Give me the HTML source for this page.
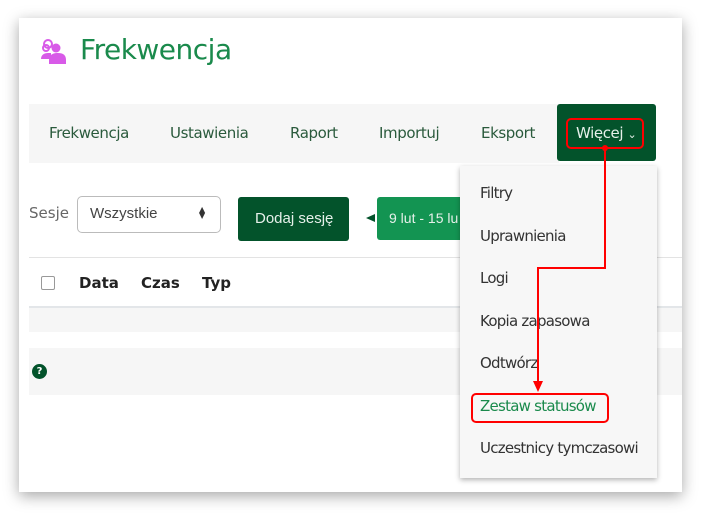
<!DOCTYPE html>
<html><head><meta charset="utf-8"><style>
body{margin:0;width:716px;height:527px;background:#fff;position:relative;overflow:hidden;font-family:"DejaVu Sans","Liberation Sans",sans-serif;}
.a{position:absolute;white-space:nowrap}
.card{position:absolute;left:19px;top:18px;width:663px;height:474px;background:#fff;box-shadow:0 4px 14px rgba(0,0,0,.35);}
.nav{font-size:15px;color:#2a5a3c;letter-spacing:-0.4px}
.dd{font-size:15px;color:#333;letter-spacing:-0.75px}
</style></head><body>
<div class="card"></div>
<svg class="a" style="left:40px;top:38px" width="28" height="26" viewBox="0 0 28 26">
<g fill="#d85ae8"><circle cx="8" cy="6" r="4" fill="none" stroke="#d85ae8" stroke-width="2"/><circle cx="6" cy="10" r="3" fill="none" stroke="#d85ae8" stroke-width="2"/><circle cx="16" cy="10" r="4.5"/><path d="M1 21c0-4 3-6 7-6h3v6H1z"/><path d="M9 26v-4c0-5 4-7 8-7h1c5 0 8 2 8 7v4z"/></g></svg>
<div class="a" style="left:80px;top:33px;font-size:28px;color:#1a8a4c;letter-spacing:-0.5px">Frekwencja</div>
<div class="a" style="left:29px;top:104px;width:530px;height:59px;background:#f6f6f6"></div>
<div class="a nav" style="left:49px;top:124px">Frekwencja</div>
<div class="a nav" style="left:170px;top:124px">Ustawienia</div>
<div class="a nav" style="left:290px;top:124px">Raport</div>
<div class="a nav" style="left:379px;top:124px">Importuj</div>
<div class="a nav" style="left:481px;top:124px">Eksport</div>
<div class="a" style="left:557px;top:104px;width:99px;height:57px;background:#03532b;border-radius:3px"></div>
<div class="a" style="left:576px;top:124px;font-size:15px;color:#e6f0ea;letter-spacing:-0.4px">Więcej <span style="font-size:11px">⌄</span></div>
<div class="a" style="left:566px;top:118px;width:74px;height:27px;border:2px solid #f00;border-radius:5px"></div>
<div class="a" style="left:29px;top:204px;font-size:15px;color:#666">Sesje</div>
<div class="a" style="left:77px;top:196px;width:142px;height:35px;border:1px solid #bbb;border-radius:5px;background:#fff"></div>
<div class="a" style="left:90px;top:205px;font-size:15px;color:#444;font-family:'Liberation Sans',sans-serif">Wszystkie</div>
<div class="a" style="left:199px;top:207px;font-size:8px;color:#333;line-height:6px">▲<br>▼</div>
<div class="a" style="left:238px;top:197px;width:111px;height:44px;background:#03532b;border-radius:3px"></div>
<div class="a" style="left:255px;top:210px;font-size:15px;color:#e6f0ea;font-family:'Liberation Sans',sans-serif">Dodaj sesję</div>
<div class="a" style="left:366px;top:214px;width:0;height:0;border-top:4px solid transparent;border-bottom:4px solid transparent;border-right:9px solid #03532b"></div>
<div class="a" style="left:377px;top:197px;width:90px;height:43px;background:#139452;border-radius:3px"></div>
<div class="a" style="left:389px;top:210px;font-size:14px;color:#e6f0ea;font-family:'Liberation Sans',sans-serif">9 lut - 15 lu</div>
<div class="a" style="left:29px;top:257px;width:653px;height:1px;background:#e3e3e3"></div>
<div class="a" style="left:41px;top:276px;width:12px;height:12px;border:1px solid #999;border-radius:2px"></div>
<div class="a" style="left:79px;top:274px;font-size:15px;font-weight:bold;color:#222">Data</div>
<div class="a" style="left:141px;top:274px;font-size:15px;font-weight:bold;color:#222">Czas</div>
<div class="a" style="left:202px;top:274px;font-size:15px;font-weight:bold;color:#222">Typ</div>
<div class="a" style="left:29px;top:306px;width:653px;height:2px;background:#e3e6e9"></div>
<div class="a" style="left:29px;top:308px;width:653px;height:24px;background:#f6f6f6"></div>
<div class="a" style="left:29px;top:348px;width:653px;height:47px;background:#f6f6f6"></div>
<div class="a" style="left:32px;top:364px;width:15px;height:15px;border-radius:50%;background:#03532b;color:#fff;font-size:10px;font-weight:bold;text-align:center;line-height:15px">?</div>
<div class="a" style="left:460px;top:166px;width:197px;height:312px;background:#f7f7f7;box-shadow:0 2px 5px rgba(0,0,0,.3)"></div>
<div class="a dd" style="left:480px;top:184px">Filtry</div>
<div class="a dd" style="left:480px;top:227px">Uprawnienia</div>
<div class="a dd" style="left:480px;top:269px">Logi</div>
<div class="a dd" style="left:480px;top:312px">Kopia zapasowa</div>
<div class="a dd" style="left:480px;top:354px">Odtwórz</div>
<div class="a dd" style="left:480px;top:397px;color:#1a8a4c">Zestaw statusów</div>
<div class="a dd" style="left:480px;top:439px">Uczestnicy tymczasowi</div>
<div class="a" style="left:471px;top:393px;width:134px;height:26px;border:2px solid #f00;border-radius:5px"></div>
<svg class="a" style="left:0;top:0" width="716" height="527">
<circle cx="605" cy="148" r="3" fill="#f00"/>
<polyline points="605,148 605,268 538,268 538,384" fill="none" stroke="#f00" stroke-width="2"/>
<polygon points="533,381 543,381 538,392" fill="#f00"/>
</svg>
</body></html>
